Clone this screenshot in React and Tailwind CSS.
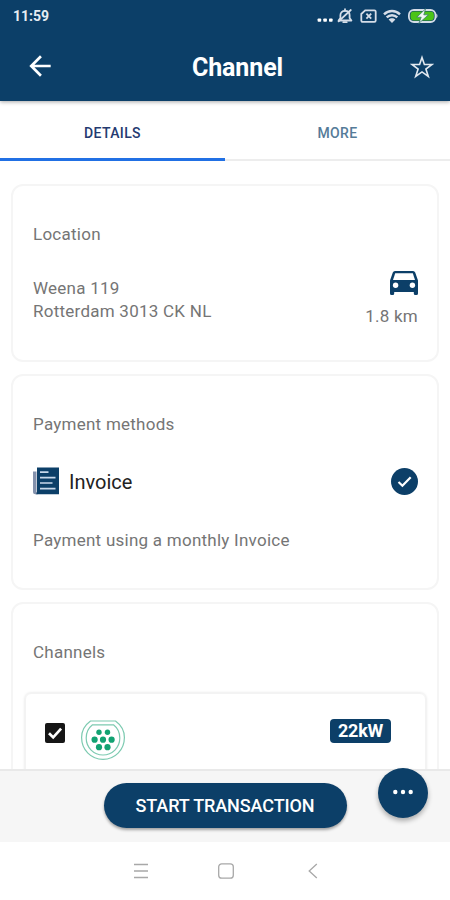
import { MdArrowBack } from "react-icons/md";

const StatusBar = () => (
  <div className="flex h-8 items-center justify-between pl-[13px] pr-3">
    <span className="text-[14px] leading-8 font-bold text-[#e6ecf2]">11:59</span>

    <div className="flex items-center text-[#d5dde8]">
      <svg className="mr-1 h-4 w-4" fill="#fff" viewBox="0 0 16 16">
        <rect height="3.4" rx="0.8" width="3.6" x="0.6" y="10.4" />
        <rect height="3.4" rx="0.8" width="3.6" x="6.3" y="10.4" />
        <rect height="3.4" rx="0.8" width="3.6" x="12" y="10.4" />
      </svg>

      {/* Muted bell */}
      <svg
        className="mr-[7px] h-4 w-4"
        fill="none"
        stroke="currentColor"
        strokeLinejoin="round"
        strokeWidth="1.8"
        viewBox="0 0 16 16"
      >
        <path d="M3.4 11V7.2C3.4 4.6 5.2 2.8 8 2.8s4.6 1.8 4.6 4.4V10l1.8 2.500H1.600L3.400 10" />
        <path d="M8 1.200v1.600M6.300 14.200h3.400M1.600 13.400L13.800 2" strokeLinecap="round" />
      </svg>

      {/* Missing SIM */}
      <svg
        className="mr-[6px] h-4 w-[17px]"
        fill="none"
        stroke="currentColor"
        strokeWidth="1.8"
        viewBox="0 0 17 16"
      >
        <path d="M5.2 2.3h9.2a1.3 1.3 0 011.3 1.3v9a1.3 1.3 0 01-1.3 1.3H2.6a1.3 1.3 0 01-1.3-1.3V6z" />
        <path d="M6.4 5.6l4.8 5M11.2 5.6l-4.8 5" />
      </svg>

      {/* Wifi */}
      <svg
        className="mr-[7px] h-4 w-[18px]"
        fill="none"
        stroke="currentColor"
        strokeWidth="2.4"
        viewBox="0 0 18 16"
      >
        <path d="M1 6.3c4.6-4.4 11.4-4.4 16 0M3.7 9.4c3-2.9 7.6-2.9 10.6 0" />
        <path d="M5.6 11.500c1.900-1.800 4.900-1.800 6.800 0L9 15z" fill="currentColor" stroke="none" />
      </svg>

      {/* Battery */}
      <svg className="h-4 w-[30px]" viewBox="0 0 30 16">
        <rect
          fill="none"
          height="12"
          rx="5"
          stroke="currentColor"
          strokeWidth="1.8"
          width="26.6"
          x="0.9"
          y="2"
        />
        <path d="M28.3 5.6c1.6 1 1.6 3.8 0 4.8z" fill="currentColor" />
        <rect fill="#4bc417" height="9" rx="3.4" width="23.4" x="2.500" y="3.500" />
        <path
          d="M17.6 0.8L8.8 9.2h4.4l-2.4 6.2 9.6-8.6h-4.6z"
          fill="#f2f8f5"
          stroke="#3c7f6c"
          strokeWidth="0.8"
        />
      </svg>
    </div>
  </div>
);

const Header = () => (
  <header className="relative z-10 h-[101px] bg-[#0c3f68] shadow-[0_1px_4px_rgba(0,0,0,0.35)]">
    <StatusBar />
    <div className="flex h-[69px] items-center justify-between pr-4 pl-[25px]">
      <button aria-label="Back" className="-ml-[1px] pb-[1px] text-white" type="button">
        <MdArrowBack className="h-8 w-8" />
      </button>
      <h1 className="pt-[1px] pl-[9px] text-[25px] leading-[69px] font-bold tracking-[-0.1px] text-white">
        Channel
      </h1>
      <button aria-label="Favourite" type="button">
        <svg
          className="h-6 w-6"
          fill="none"
          stroke="#e3e9f0"
          strokeWidth="1.6"
          viewBox="0 0 24 24"
        >
          <path d="M12 2.5l2.4 7h7.6l-6.1 4.5 2.4 7.4L12 16.9l-6.3 4.5 2.4-7.4L2 9.5h7.6z" />
        </svg>
      </button>
    </div>
  </header>
);

const Tabs = () => (
  <nav className="flex h-[60px] text-[14px] font-medium tracking-[0.35px]">
    <button
      className="flex-1 border-b-[3px] border-[#2170e4] pt-[7px] text-[#243a70]"
      type="button"
    >
      DETAILS
    </button>
    <button
      className="flex-1 border-b-2 border-[#ededed] pt-[6px] text-[#557b98]"
      type="button"
    >
      MORE
    </button>
  </nav>
);

const Card = ({ className, title, children }) => (
  <section
    className={`shrink-0 rounded-xl border-2 border-[#f5f5f5] bg-white pr-[19px] pl-5 text-[17px] leading-6 tracking-[0.25px] text-[#757575] ${className}`}
  >
    <h2 className="pt-9">{title}</h2>
    {children}
  </section>
);

const CarIcon = () => (
  <svg className="h-6 w-7" viewBox="0 0 28 24">
    <path
      d="M5 0h18a2.5 2.5 0 012.2 1.6L28 9.5v13a1.5 1.5 0 01-1.5 1.5h-1.2a1.5 1.5 0 01-1.5-1.5V21H4.2v1.5A1.5 1.5 0 012.7 24H1.5A1.5 1.5 0 010 22.5v-13l2.8-7.9A2.5 2.5 0 015 0z"
      fill="#0c3f68"
    />
    <path d="M5.2 2.3h17.6L25 9H3z" fill="#fff" />
    <circle cx="5.6" cy="14.3" fill="#fff" r="2.7" />
    <circle cx="22.4" cy="14.3" fill="#fff" r="2.7" />
  </svg>
);

const CheckBadge = () => (
  <svg className="h-[27px] w-[27px]" viewBox="0 0 27 27">
    <circle cx="13.5" cy="13.5" fill="#0c3f68" r="13.5" />
    <path d="M7.5 14l3.9 3.7 8.3-8.5" fill="none" stroke="#fff" strokeWidth="2.2" />
  </svg>
);

const InvoiceIcon = () => (
  <svg className="h-7 w-[26px]" viewBox="0 0 26 28">
    <path d="M0 4.5h3.5V25H5v2.3H2.5A2.5 2.5 0 010 24.8z" fill="#8391ac" />
    <path d="M4 0.5h22v26.8H2.5C3.6 27 4 26 4 24.5z" fill="#0c3f68" />
    <path
      d="M7 5.2h8.5M7 10.6h15.5M7 16h12.5M7 21.6h15.5"
      stroke="#c7d8ea"
      strokeWidth="1.7"
    />
  </svg>
);

const PlugIcon = () => (
  <svg className="h-10 w-11" viewBox="0 0 44 40">
    <g fill="none" stroke="#7ccab0" strokeWidth="1.2">
      <path d="M9.5 1h25C40 5 43.4 11 43.4 17.5 43.4 30 33.8 39.4 22 39.4S.6 30 .6 17.5C.6 11 4 5 9.500 1z" />
      <path d="M11.5 4.8h21c3.8 3 6.3 7.7 6.3 13.2C38.8 27.5 31.3 35 22 35S5.2 27.5 5.2 18c0-5.5 2.5-10.2 6.3-13.2z" />
    </g>
    <g fill="#12a272">
      <circle cx="18" cy="12.3" r="2.7" />
      <circle cx="26.5" cy="12.3" r="2.7" />
      <circle cx="13.6" cy="19.7" r="3.1" />
      <circle cx="22" cy="19.7" r="3.1" />
      <circle cx="30.6" cy="19.7" r="3.1" />
      <circle cx="18" cy="27.2" r="3.1" />
      <circle cx="26.5" cy="27.2" r="3.1" />
    </g>
  </svg>
);

const Checkbox = () => (
  <svg className="h-5 w-5" viewBox="0 0 20 20">
    <rect fill="#161616" height="20" rx="2" width="20" />
    <path d="M4 10.2l4.2 4.2 7.9-8.7" fill="none" stroke="#fff" strokeWidth="2.7" />
  </svg>
);

const BottomBar = () => (
  <footer className="relative flex h-[73px] shrink-0 justify-center border-t-2 border-[#e9e9e9] bg-[#f6f6f6] pt-3">
    <button
      className="h-[45px] w-[243px] rounded-full bg-[#0c3f68] text-[18px] font-medium tracking-[-0.1px] text-white shadow-[0_2px_3px_rgba(0,0,0,0.35)]"
      type="button"
    >
      START TRANSACTION
    </button>
    <button
      aria-label="More actions"
      className="absolute -top-[3px] right-[22px] flex h-[50px] w-[50px] items-center justify-center rounded-full bg-[#0c3f68] shadow-[0_3px_5px_rgba(0,0,0,0.3)]"
      type="button"
    >
      <svg className="mb-[2px] h-5 w-5" fill="#fff" viewBox="0 0 20 20">
        <circle cx="2.3" cy="10" r="2.2" />
        <circle cx="10" cy="10" r="2.2" />
        <circle cx="17.7" cy="10" r="2.2" />
      </svg>
    </button>
  </footer>
);

const SystemNav = () => (
  <div className="flex h-[58px] shrink-0 items-center justify-center bg-white text-[#a8a8a8]">
    <svg
      className="h-4 w-[190px]"
      fill="none"
      stroke="currentColor"
      strokeWidth="1.3"
      viewBox="0 0 190 16"
    >
      <path d="M4 1.500h14M4 8h14M4 14.500h14" />
      <rect height="14.4" rx="3" width="14.6" x="88.7" y="0.8" />
      <path d="M186.8 1l-7.6 7 7.6 7" />
    </svg>
  </div>
);

const App = () => {
  return (
    <div className="flex h-[900px] w-[450px] flex-col overflow-hidden bg-white font-[Roboto,sans-serif]">
      <Header />
      <Tabs />

      <main className="flex min-h-0 flex-1 flex-col gap-3 overflow-hidden px-[11px] pt-[23px]">
        <Card className="h-[178px]" title="Location">
          <div className="flex justify-between pt-[22px]">
            <p className="pt-[9px] leading-[23px]">
              Weena 119
              <br />
              Rotterdam 3013 CK NL
            </p>
            <div className="flex flex-col items-end pt-[3px]">
              <CarIcon />
              <span className="pt-[9px]">1.8 km</span>
            </div>
          </div>
        </Card>

        <Card className="h-[216px]" title="Payment methods">
          <div className="mt-[31px] flex h-7 items-center">
            <InvoiceIcon />
            <span className="pt-[2px] pl-[10px] text-[20px] tracking-normal text-[#222]">
              Invoice
            </span>
            <span className="ml-auto">
              <CheckBadge />
            </span>
          </div>
          <p className="pt-[33px]">Payment using a monthly Invoice</p>
        </Card>

        <Card className="h-[216px]" title="Channels">
          <div className="-mx-[8px] mt-[29px] flex h-[140px] items-start rounded-md border border-[#f3f3f3] pt-[25px] pr-5 pl-[19px] shadow-[0_0_3px_rgba(0,0,0,0.14)]">
            <span className="pt-[4px]">
              <Checkbox />
            </span>
            <span className="pt-[1px] pl-4">
              <PlugIcon />
            </span>
            <span className="mr-[14px] ml-auto h-6 w-[61px] rounded-[4px] bg-[#0c3f68] text-center text-[18px] leading-[23px] font-bold tracking-[-0.3px] text-white">
              22kW
            </span>
          </div>
        </Card>
      </main>

      <BottomBar />
      <SystemNav />
    </div>
  );
};

export default App;
